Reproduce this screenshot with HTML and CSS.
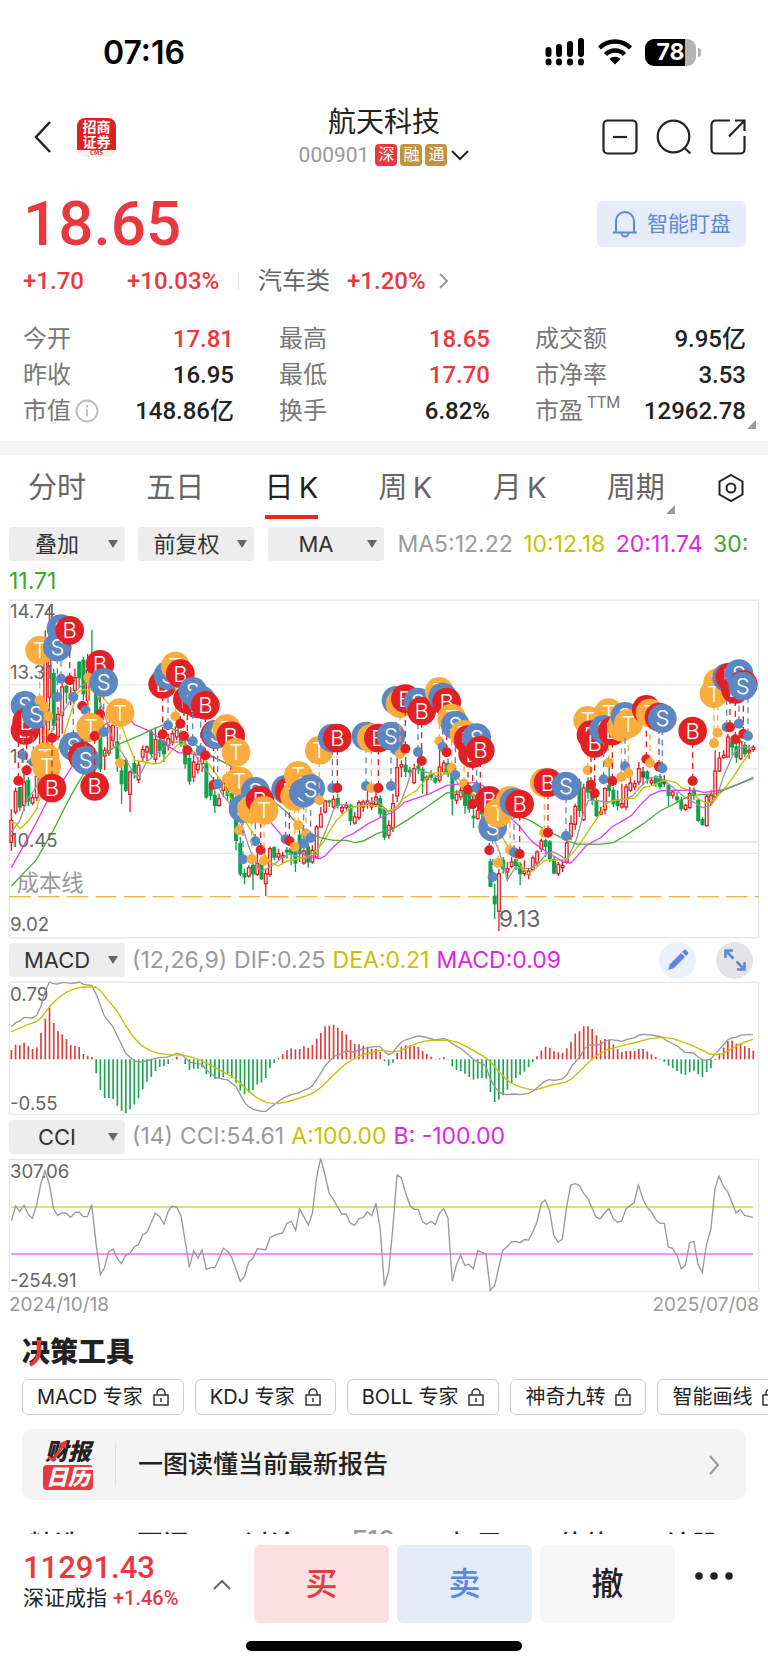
FILE: index.html
```html
<!DOCTYPE html>
<html lang="zh-CN">
<head>
    <meta charset="UTF-8">
    <meta name="viewport" content="width=device-width, initial-scale=1.0">
    <title>航天科技 000901</title>
    <link rel="stylesheet" href="styles.css">
</head>
<body>

    <!-- Status bar -->
    <div class="status">
        <span class="clock">07:16</span>
        <div class="status-icons">
            <svg width="40" height="28" viewBox="0 0 40 28">
                <path d="M3.500 12v4M14 9v7M25 6v10M36 3v13" stroke="#000" stroke-width="6" stroke-linecap="round"/>
                <path d="M3.500 23.500v1M14 23.500v1M25 23.500v1M36 23.500v1" stroke="#000" stroke-width="6" stroke-linecap="round"/>
            </svg>
            <svg width="34" height="26" viewBox="0 0 34 26" fill="none" stroke="#000" stroke-width="4.500">
                <path d="M1.500 9a22 22 0 0 1 31 0"/>
                <path d="M7.500 15.500a13.500 13.500 0 0 1 19 0"/>
                <path d="M11.500 20a8 8 0 0 1 11 0L17 25.500z" fill="#000" stroke="none"/>
            </svg>
            <span class="battery"><b>78</b></span>
        </div>
    </div>

    <!-- Title bar -->
    <header class="topbar">
        <div class="side left">
            <button class="icon-btn" aria-label="返回">
                <svg width="18" height="32" viewBox="0 0 18 32"><path d="M16 1L2 16l14 15" fill="none" stroke="#222" stroke-width="2.500"/></svg>
            </button>
            <div class="broker"><span>招商</span><span>证券</span><small>CMS</small></div>
        </div>
        <div class="stock">
            <h1>航天科技</h1>
            <div class="code">
                <span>000901</span><i class="tag red">深</i><i class="tag">融</i><i class="tag">通</i>
                <svg width="18" height="11" viewBox="0 0 18 11"><path d="M1 1l8 8 8-8" fill="none" stroke="#222" stroke-width="2"/></svg>
            </div>
        </div>
        <div class="side right">
            <button class="icon-btn" aria-label="移除自选">
                <svg width="36" height="36" viewBox="0 0 36 36" fill="none" stroke="#222" stroke-width="2.200"><rect x="1.500" y="1.500" width="33" height="33" rx="4"/><path d="M11 18h14"/></svg>
            </button>
            <button class="icon-btn" aria-label="搜索">
                <svg width="36" height="36" viewBox="0 0 36 36" fill="none" stroke="#222" stroke-width="2.200"><circle cx="17.500" cy="17.500" r="15.800"/><path d="M28 28.500l6.500 6"/></svg>
            </button>
            <button class="icon-btn" aria-label="分享">
                <svg width="36" height="36" viewBox="0 0 36 36" fill="none" stroke="#222" stroke-width="2.200"><path d="M20 1.500H5.500a4 4 0 0 0-4 4v25a4 4 0 0 0 4 4h25a4 4 0 0 0 4-4V17M19 17.500L34 2M25 1.500h9.500V12"/></svg>
            </button>
        </div>
    </header>

    <!-- Quote -->
    <section class="quote">
        <div class="price-row">
            <strong class="price">18.65</strong>
            <button class="watch">
                <svg width="26" height="28" viewBox="0 0 26 28" fill="none" stroke="#5b87dc" stroke-width="2"><path d="M1 22.500h24M4 22V11a9 9 0 0 1 18 0v11M9.500 23a3.500 3.500 0 0 0 7 0"/></svg>
                <span>智能盯盘</span>
            </button>
        </div>
        <div class="change-row">
            <span class="up chg">+1.70</span>
            <span class="up pct">+10.03%</span>
            <span class="sector">汽车类</span>
            <span class="up">+1.20%</span>
            <svg width="10" height="16" viewBox="0 0 10 16"><path d="M1 1l7 7-7 7" fill="none" stroke="#999" stroke-width="2"/></svg>
        </div>
        <dl class="stats">
            <div><dt>今开</dt><dd class="up">17.81</dd></div>
            <div><dt>最高</dt><dd class="up">18.65</dd></div>
            <div><dt>成交额</dt><dd>9.95亿</dd></div>
            <div><dt>昨收</dt><dd>16.95</dd></div>
            <div><dt>最低</dt><dd class="up">17.70</dd></div>
            <div><dt>市净率</dt><dd>3.53</dd></div>
            <div><dt>市值<svg width="24" height="24" viewBox="0 0 24 24" fill="none" stroke="#bbb" stroke-width="1.800"><circle cx="12" cy="12" r="10.500"/><path d="M12 10.500v7M12 6v2.500"/></svg></dt><dd>148.86亿</dd></div>
            <div><dt>换手</dt><dd>6.82%</dd></div>
            <div class="more"><dt>市盈<sup>TTM</sup></dt><dd>12962.78</dd></div>
        </dl>
    </section>

    <!-- Period tabs -->
    <nav class="tabs">
        <a href="#">分时</a>
        <a href="#">五日</a>
        <a href="#" class="active">日&thinsp;K</a>
        <a href="#">周&thinsp;K</a>
        <a href="#">月&thinsp;K</a>
        <a href="#" class="drop">周期</a>
        <button class="icon-btn" aria-label="设置">
            <svg width="28" height="30" viewBox="0 0 28 30" fill="none" stroke="#222" stroke-width="2"><path d="M14 2l11.500 6.500v13L14 28 2.500 21.500v-13z"/><circle cx="14" cy="15" r="4.500"/></svg>
        </button>
    </nav>

    <!-- Charts -->
    <main class="charts">
        <div class="legend">
            <label class="pick"><select aria-label="叠加"><option>叠加</option></select></label>
            <label class="pick"><select aria-label="复权"><option>前复权</option></select></label>
            <label class="pick"><select aria-label="主图指标"><option>MA</option></select></label>
            <span class="c-gray">MA5:12.22</span>
            <span class="c-yellow">10:12.18</span>
            <span class="c-pink">20:11.74</span>
            <span class="c-green">30:<wbr>11.71</span>
        </div>
        <svg id="kline" class="plot" viewBox="27 29 2250 1014"></svg>

        <div class="legend tools">
            <label class="pick"><select aria-label="副图指标一"><option>MACD</option></select></label>
            <span class="c-gray">(12,26,9)</span>
            <span class="c-gray">DIF:0.25</span>
            <span class="c-yellow">DEA:0.21</span>
            <span class="c-pink">MACD:0.09</span>
            <button class="round" aria-label="画线">
                <svg width="22" height="22" viewBox="0 0 22 22" fill="#5b87dc"><path d="M1 21l2-6L14 4l4 4L7 19zM15 3l2-2q1-1 2 0l2 2q1 1 0 2l-2 2z"/></svg>
            </button>
            <button class="round dark" aria-label="全屏">
                <svg width="22" height="22" viewBox="0 0 22 22" fill="none" stroke="#5b87dc" stroke-width="2.600"><path d="M1.500 9V1.500H9M2 2l7.500 7.500M13 20.500h7.500V13M20 20l-7.500-7.500"/></svg>
            </button>
        </div>
        <svg id="macd" class="plot" viewBox="27 156 2250 398"></svg>

        <div class="legend tools">
            <label class="pick"><select aria-label="副图指标二"><option>CCI</option></select></label>
            <span class="c-gray">(14)</span>
            <span class="c-gray">CCI:54.61</span>
            <span class="c-yellow">A:100.00</span>
            <span class="c-pink">B: -100.00</span>
        </div>
        <svg id="cci" class="plot" viewBox="27 687 2250 398"></svg>

        <div class="dates"><time>2024/10/18</time><time>2025/07/08</time></div>
    </main>

    <!-- Tools -->
    <section class="decide">
        <h2>决策工具
            <svg width="28" height="28" viewBox="0 0 28 28" fill="none" stroke="#e9383f" stroke-width="4"><path d="M17 1v12q-1 9-9 13"/></svg>
        </h2>
        <div class="chips">
            <button>MACD 专家 <svg class="lock" viewBox="0 0 16 18"><path d="M1 7h14v10H1zM4 7V5a4 4 0 0 1 8 0v2M8 10v4"/></svg></button>
            <button>KDJ 专家 <svg class="lock" viewBox="0 0 16 18"><path d="M1 7h14v10H1zM4 7V5a4 4 0 0 1 8 0v2M8 10v4"/></svg></button>
            <button>BOLL 专家 <svg class="lock" viewBox="0 0 16 18"><path d="M1 7h14v10H1zM4 7V5a4 4 0 0 1 8 0v2M8 10v4"/></svg></button>
            <button>神奇九转 <svg class="lock" viewBox="0 0 16 18"><path d="M1 7h14v10H1zM4 7V5a4 4 0 0 1 8 0v2M8 10v4"/></svg></button>
            <button>智能画线 <svg class="lock" viewBox="0 0 16 18"><path d="M1 7h14v10H1zM4 7V5a4 4 0 0 1 8 0v2M8 10v4"/></svg></button>
        </div>
        <a href="#" class="report">
            <span class="report-logo">
                <b>财报</b><em>日历</em>
                <svg width="24" height="24" viewBox="0 0 24 24"><path d="M3 18l5 3L18 6" fill="none" stroke="#e9383f" stroke-width="3"/><path d="M13 5l9-4-1 9z" fill="#e9383f"/></svg>
            </span>
            <span class="report-text">一图读懂当前最新报告</span>
            <svg width="12" height="20" viewBox="0 0 12 20"><path d="M2 1l8 9-8 9" fill="none" stroke="#999" stroke-width="2"/></svg>
        </a>
    </section>

    <nav class="news">
        <a href="#">精选</a><a href="#">要闻</a><a href="#">讨论</a><a href="#" class="dim">F10</a><a href="#">扫雷</a><a href="#">估值</a><a href="#">诊股</a>
    </nav>

    <!-- Trade bar -->
    <footer class="trade">
        <div class="index">
            <strong>11291.43</strong>
            <div>深证成指 <span class="up">+1.46%</span></div>
        </div>
        <button class="icon-btn" aria-label="展开指数">
            <svg width="18" height="11" viewBox="0 0 18 11"><path d="M1 10l8-8 8 8" fill="none" stroke="#666" stroke-width="2"/></svg>
        </button>
        <button class="act buy">买</button>
        <button class="act sell">卖</button>
        <button class="act cancel">撤</button>
        <button class="icon-btn dots" aria-label="更多">
            <svg width="38" height="8" viewBox="0 0 38 8" fill="#222"><circle cx="4" cy="4" r="3.800"/><circle cx="19" cy="4" r="3.800"/><circle cx="34" cy="4" r="3.800"/></svg>
        </button>
    </footer>
    <div class="home"></div>

<script src="chart.js"></script>
</body>
</html>
```
FILE: styles.css
```css
* {
    box-sizing: border-box;
}

body {
    margin: 0;
    background: #fff;
    color: #222;
    font-family: Inter, "Noto Sans CJK SC", sans-serif;
    overflow-x: hidden;
}

button {
    font-family: inherit;
    border: none;
    padding: 0;
    cursor: pointer;
}

a {
    color: inherit;
    text-decoration: none;
}

svg {
    display: block;
    flex: none;
}

.icon-btn {
    background: none;
}

.up {
    color: #e9383f;
}

/* Status bar */
.status {
    height: 104px;
    padding: 0 66px 0 103px;
    display: flex;
    align-items: center;
    justify-content: space-between;
}

.clock {
    font-size: 32px;
    font-weight: 600;
    color: #000;
}

.status-icons {
    display: flex;
    align-items: center;
    gap: 13px;
}

.battery {
    position: relative;
    width: 51px;
    height: 27px;
    border-radius: 9px;
    background: linear-gradient(90deg, #000 78%, #b3b3b3 78%);
    color: #fff;
    font-size: 23px;
    line-height: 27px;
    text-align: center;
    margin-right: 6px;
}

.battery::after {
    content: "";
    position: absolute;
    right: -5px;
    top: 9px;
    width: 3px;
    height: 9px;
    border-radius: 0 3px 3px 0;
    background: #b3b3b3;
}

/* Title bar */
.topbar {
    height: 80px;
    margin-bottom: 6px;
    padding: 0 22px 20px;
    display: grid;
    grid-template-columns: 1fr auto 1fr;
    align-items: center;
}

.side {
    display: flex;
    align-items: center;
    gap: 25px;
}

.side.left {
    padding-left: 12px;
}

.side.right {
    justify-content: flex-end;
    gap: 18px;
}

.broker {
    width: 39px;
    height: 39px;
    border-radius: 8px;
    background: linear-gradient(#dd2222 82%, #f6f0f0 82%);
    color: #fff;
    display: flex;
    flex-direction: column;
    align-items: center;
    font-family: "Noto Sans CJK SC", sans-serif;
    font-size: 14px;
    font-weight: 700;
    line-height: 15px;
    padding-top: 1px;
}

.broker small {
    font-size: 6px;
    line-height: 8px;
    color: #dd2222;
}

.stock h1 {
    margin: 0;
    font-size: 28px;
    line-height: 36px;
    font-weight: 400;
    text-align: center;
}

.code {
    display: flex;
    align-items: center;
    gap: 3px;
    font-family: Roboto, "Noto Sans CJK SC", sans-serif;
    font-size: 21px;
    line-height: 30px;
    color: #999;
}

.code span {
    margin-right: 3px;
}

.code svg {
    margin-left: 1px;
}

.tag {
    width: 22px;
    height: 22px;
    border-radius: 4px;
    background: #c4923f;
    color: #fff;
    font-size: 16px;
    font-style: normal;
    line-height: 21px;
    text-align: center;
}

.tag.red {
    background: #e9383f;
}

/* Quote */
.quote {
    padding: 0 22px 12px 23px;
    font-family: Roboto, "Noto Sans CJK SC", sans-serif;
    border-bottom: 14px solid #f4f4f4;
}

.price-row {
    display: flex;
    align-items: center;
    justify-content: space-between;
}

.price {
    font-size: 62px;
    line-height: 68px;
    font-weight: 500;
    color: #e9383f;
}

.watch {
    display: flex;
    align-items: center;
    gap: 9px;
    width: 149px;
    height: 46px;
    padding-left: 15px;
    border-radius: 6px;
    background: #e6ecf8;
    color: #5b87dc;
    font-size: 21px;
    line-height: 44px;
}

.change-row {
    display: flex;
    align-items: center;
    margin: 5px 0 22px;
    font-size: 24px;
    line-height: 36px;
    font-weight: 500;
}

.chg {
    width: 104px;
}

.pct {
    width: 112px;
    border-right: 1px solid #e5e5e5;
    line-height: 18px;
}

.sector {
    margin: 0 17px 0 19px;
    font-weight: 400;
    color: #666;
}

.change-row svg {
    margin-left: 13px;
}

.stats {
    display: grid;
    grid-template-columns: repeat(3, 1fr);
    column-gap: 45px;
    margin: 0;
}

.stats div {
    display: flex;
    align-items: center;
    justify-content: space-between;
    height: 36px;
    font-size: 24px;
    line-height: 36px;
    white-space: nowrap;
}

.stats dt {
    display: flex;
    align-items: center;
    gap: 4px;
    color: #777;
}

.stats dd {
    margin: 0;
    font-weight: 500;
}

.stats sup {
    align-self: flex-start;
    font-size: 16px;
    line-height: 20px;
}

.stats .more {
    position: relative;
}

.more::after,
.drop::after {
    content: "";
    position: absolute;
    right: -10px;
    bottom: 0;
    border-left: 9px solid transparent;
    border-bottom: 9px solid #999;
}

/* Period tabs */
.tabs {
    display: flex;
    align-items: center;
    justify-content: space-between;
    height: 66px;
    padding: 0 23px 0 28px;
    font-size: 29px;
    color: #666;
}

.tabs a {
    position: relative;
    line-height: 62px;
}

.tabs .icon-btn {
    margin-left: -8px;
}

.tabs .active {
    color: #222;
}

.tabs .active::after {
    content: "";
    position: absolute;
    left: 0;
    right: 0;
    bottom: 0;
    height: 4px;
    background: #f02222;
}

.tabs .drop::after {
    bottom: 5px;
}

/* Charts */
.charts {
    padding: 0 9px;
}

.legend {
    font-size: 23px;
    line-height: 37px;
    padding: 5px 0 0;
}

.legend span + span {
    margin-left: 4px;
}

.pick {
    position: relative;
    display: inline-block;
    vertical-align: top;
    width: 116px;
    height: 34px;
    margin: 1px 7px 0 0;
}

.pick select {
    appearance: none;
    display: block;
    width: 100%;
    height: 34px;
    padding: 0 20px 0 0;
    border: none;
    border-radius: 4px;
    background: #ededed;
    color: #333;
    font-family: inherit;
    font-size: 22px;
    line-height: 34px;
    text-align: center;
    text-align-last: center;
}

.pick::after {
    content: "";
    position: absolute;
    right: 7px;
    top: 13px;
    border: 5px solid transparent;
    border-top: 8px solid #666;
    border-bottom: 0;
}

.legend.tools {
    display: flex;
    align-items: center;
    gap: 7px;
    height: 44px;
    padding: 0;
}

.tools .pick,
.tools span + span {
    margin: 0;
}

.c-gray { color: #9a9a9e; }
.c-yellow { color: #c3c400; }
.c-pink { color: #e025e8; }
.c-green { color: #3da726; }

.round {
    width: 37px;
    height: 37px;
    border-radius: 50%;
    background: #ebf0fa;
    display: flex;
    align-items: center;
    justify-content: center;
    margin-left: auto;
}

.round.dark {
    background: #e4e4e6;
    margin-left: 13px;
    margin-right: 6px;
}

.plot {
    width: 100%;
    height: auto;
    overflow: visible;
}

.frame {
    fill: none;
    stroke: #e8e8e8;
    stroke-width: 4;
}

.grid {
    stroke: #e8e8e8;
    stroke-width: 4;
}

.axis {
    font-size: 56px;
    fill: #666;
}

.cost {
    font-size: 67px;
    fill: #999;
}

.low {
    font-size: 69px;
    fill: #666;
}

.badge {
    font-size: 66px;
    font-weight: 300;
    fill: #fff;
    text-anchor: middle;
}

.line {
    fill: none;
    stroke-width: 4;
}

.dates {
    display: flex;
    justify-content: space-between;
    font-size: 19px;
    line-height: 28px;
    color: #999;
}

/* Tools */
.decide {
    padding: 15px 22px 0;
}

.decide h2 {
    position: relative;
    margin: 0;
    font-size: 28px;
    line-height: 36px;
    font-weight: 900;
}

.decide h2 svg {
    position: absolute;
    left: 0;
    top: 5px;
}

.chips {
    display: flex;
    gap: 11px;
    margin: 9px -22px 14px 0;
    overflow: hidden;
}

.chips button {
    flex: none;
    display: flex;
    align-items: center;
    gap: 10px;
    height: 36px;
    padding: 0 14px;
    border: 1px solid #ccc;
    border-radius: 6px;
    background: #fff;
    color: #222;
    font-size: 20px;
    line-height: 34px;
}

.lock {
    width: 16px;
    height: 18px;
    fill: none;
    stroke: #333;
    stroke-width: 1.5;
}

.report {
    display: flex;
    align-items: center;
    height: 71px;
    padding: 0 26px 0 21px;
    border-radius: 10px;
    background: #f4f4f4;
}

.report-logo {
    position: relative;
    width: 50px;
    text-align: center;
    line-height: 25px;
}

.report-logo b {
    display: block;
    font-size: 23px;
    font-weight: 900;
    font-style: italic;
}

.report-logo em {
    display: block;
    border-radius: 4px;
    background: #e9383f;
    color: #fff;
    font-size: 22px;
    font-weight: 900;
}

.report-logo svg {
    position: absolute;
    left: 2px;
    top: -1px;
}

.report-text {
    flex: 1;
    margin-left: 22px;
    padding-left: 22px;
    border-left: 1px solid #e2e2e2;
    font-size: 25px;
    font-weight: 500;
    line-height: 43px;
}

.news {
    display: flex;
    justify-content: space-between;
    height: 11px;
    margin-top: 23px;
    padding: 0 50px 0 29px;
    overflow: hidden;
    font-size: 26px;
    line-height: 43px;
    font-weight: 500;
}

.news .dim {
    color: #999;
    line-height: 34px;
}

/* Trade bar */
.trade {
    display: flex;
    align-items: center;
    gap: 8px;
    padding: 11px 35px 18px 23px;
}

.index {
    flex: none;
    width: 182px;
    margin-bottom: 6px;
    font-size: 21px;
    line-height: 26px;
    white-space: nowrap;
}

.index .up {
    font-family: Roboto, sans-serif;
    font-weight: 500;
    font-size: 20px;
}

.index strong {
    display: block;
    font-family: Roboto, sans-serif;
    font-size: 31px;
    line-height: 34px;
    font-weight: 500;
    color: #e9383f;
}

.act {
    flex: 1;
    height: 78px;
    border-radius: 6px;
    font-size: 32px;
    font-weight: 500;
    line-height: 74px;
}

.index + .icon-btn {
    margin-right: 15px;
}

.buy {
    background: #fcdfe0;
    color: #e9383f;
}

.sell {
    background: #e4ebf8;
    color: #5b87dc;
}

.cancel {
    background: #f6f6f6;
    color: #222;
}

.dots {
    margin: 0 0 16px 12px;
}

.home {
    width: 36%;
    height: 10px;
    margin: 0 auto 14px;
    border-radius: 5px;
    background: #000;
}
```
FILE: chart.js
```js
const NS = 'http://www.w3.org/2000/svg';
const RED = '#e32024';
const GREEN = '#0fa24b';
const COLORS = { B: '#e32024', S: '#5d87c3', T: '#faac3c' };
const START = 34;
const STEP = 12.72;

function add(svg, name, attrs, text) {
    const el = document.createElementNS(NS, name);
    for (const key in attrs) el.setAttribute(key, attrs[key]);
    if (text) el.textContent = text;
    svg.appendChild(el);
    return el;
}

function line(svg, points, color) {
    add(svg, 'polyline', { points: points, class: 'line', stroke: color });
}

// direction, high, body top, body bottom, low
const candles = `u 657 690 756 782|u 592 603 665 672|d 590 592 650 662|u 545 575 645 662|d 560 571 632 648|u 610 622 638 645
u 540 558 622 632|u 400 410 480 560|u 120 165 480 600|u 50 170 320 420|d 235 250 405 420|u 350 372 440 450
u 270 290 375 430|d 285 288 305 340|u 290 310 322 345|u 235 262 300 320|d 212 216 262 290|d 200 210 310 330
u 190 240 330 345|d 118 260 290 300|d 250 300 370 395|d 300 370 535 545|u 470 480 497 540|u 400 410 488 496
u 395 405 450 470|d 410 455 505 545|d 530 542 580 640|d 502 510 600 605|u 540 545 612 665|d 497 520 548 565
u 512 525 568 578|u 465 478 500 515|u 465 470 485 512|d 418 425 490 500|u 410 448 507 520|d 430 450 480 500
d 440 455 490 515|u 430 445 465 480|u 420 430 455 465|u 400 410 440 450|d 420 430 460 470|d 450 465 520 535
d 490 505 572 583|u 490 515 560 575|u 500 522 538 550|u 480 500 520 545|d 510 520 620 625|d 580 590 615 630
d 600 615 645 668|u 610 625 645 650|u 560 580 600 620|d 590 600 615 630|d 590 610 640 660|d 660 690 750 780
d 740 760 850 858|d 835 850 860 882|u 825 832 857 862|d 815 825 850 898|u 790 820 852 857|d 800 820 865 870
u 835 850 880 918|u 768 775 852 860|d 768 772 800 810|u 775 790 800 812|u 785 795 800 822|d 770 780 785 805
d 765 775 790 825|d 770 785 818 845|d 720 735 790 815|u 770 782 818 823|d 760 770 815 832|u 765 780 815 820
u 705 710 800 805|u 650 672 710 712|u 628 632 665 670|d 628 632 635 650|u 615 627 650 655|d 610 625 645 655
u 645 652 662 672|u 635 645 652 658|d 640 645 690 705|u 665 680 698 703|u 630 637 682 690|u 628 635 650 665
u 600 632 640 655|u 620 640 650 660|u 605 620 642 650|d 615 625 670 680|d 650 655 740 750|u 690 705 735 745
u 610 640 713 725|u 500 532 617 635|u 510 523 530 560|d 500 525 543 560|d 530 540 545 560|u 520 535 577 582
d 520 528 538 550|d 530 537 570 610|u 555 560 567 612|d 540 550 560 570|d 558 565 575 580|u 470 530 570 577
u 510 518 545 550|d 505 520 550 560|d 545 555 625 675|u 600 612 630 642|u 590 600 620 630|d 585 600 645 670
d 600 610 655 668|d 650 678 682 713|u 650 660 685 687|d 640 650 670 690|d 650 680 720 740|d 805 815 888 890
d 880 918 940 985|u 835 850 963 1022|d 800 810 835 850|u 815 835 845 870|u 800 815 828 833|d 790 808 825 840
d 815 822 850 885|u 810 842 850 858|u 835 842 852 867|u 795 803 838 843|u 780 785 818 828|u 745 752 775 785
d 745 752 768 800|d 750 755 805 815|d 800 808 848 852|u 815 822 850 858|u 808 825 832 845|u 750 758 815 820
u 675 700 738 750|u 640 648 702 718|d 565 575 660 680|u 580 593 688 692|d 560 575 605 625|d 590 610 630 645
d 620 632 675 680|u 650 665 672 675|u 590 595 658 672|d 530 585 600 620|d 590 600 640 650|d 600 630 645 660
u 580 640 650 655|u 580 590 650 660|u 560 578 600 605|u 570 580 590 600|u 515 535 575 585|n 530 545 560 585
d 540 545 565 580|u 560 570 578 585|d 555 560 580 590|d 550 560 588 597|n 555 570 580 590|d 580 585 615 648
u 598 605 615 625|d 605 620 628 635|d 620 630 655 662|u 640 645 657 663|u 590 610 652 656|d 590 600 615 630
d 625 630 690 695|d 680 688 703 705|u 610 618 706 708|u 600 615 635 645|u 480 542 620 630|u 485 503 542 545
u 480 495 502 505|u 430 440 500 502|d 450 455 470 495|d 460 470 500 517|u 450 455 505 510|d 455 465 490 500
u 465 480 485 505|u 465 470 478 485`.split(/[|\n]/);

const ma = {
    '#999': '34,725 60,690 72,655 85,620 100,603 115,580 128,520 148,440 165,400 185,370 212,330 225,305 240,290 262,275 285,300 300,335 313,370 330,425 350,465 365,485 380,510 395,540 408,560 420,553 440,515 460,497 480,483 495,468 515,460 530,455 545,452 560,462 575,480 590,500 610,530 632,555 650,580 665,610 690,640 710,670 730,715 745,765 760,805 775,835 785,842 800,835 825,820 845,803 860,795 870,790 890,797 910,805 930,800 950,790 965,750 980,715 1000,660 1015,643 1040,642 1060,650 1080,648 1100,640 1130,630 1150,650 1165,665 1180,658 1200,640 1220,590 1235,540 1250,535 1275,545 1295,550 1315,560 1335,550 1350,550 1375,580 1400,605 1425,625 1445,660 1460,690 1480,740 1500,790 1522,870 1545,832 1590,835 1615,820 1640,790 1660,785 1680,795 1700,808 1715,780 1730,745 1750,670 1765,630 1785,630 1820,635 1850,630 1880,625 1900,615 1920,590 1950,563 1970,560 1990,567 2010,585 2030,600 2050,618 2070,630 2090,640 2107,652 2120,648 2133,645 2150,620 2170,560 2200,490 2215,475 2235,468 2260,475',
    '#c3c400': '34,695 48,700 60,715 85,692 110,655 130,590 160,510 190,440 215,360 235,305 250,297 275,300 300,312 325,340 350,375 365,405 385,460 405,510 435,515 460,521 480,518 500,500 520,475 535,462 550,460 570,475 590,490 610,500 640,540 670,580 700,640 740,700 760,730 785,780 810,815 835,827 860,812 900,805 930,795 950,780 970,755 990,720 1010,690 1030,670 1055,650 1090,645 1130,647 1150,655 1165,662 1185,655 1210,625 1250,600 1275,570 1290,550 1320,546 1350,548 1375,565 1400,590 1430,620 1460,670 1490,710 1530,780 1560,825 1585,852 1600,840 1635,810 1700,808 1725,780 1750,745 1780,700 1820,640 1840,630 1905,623 1930,592 1960,585 1985,572 2005,570 2030,578 2045,592 2070,602 2095,625 2115,637 2130,637 2150,620 2170,600 2200,560 2225,520 2240,500 2260,480',
    '#e83cf0': '34,832 80,750 110,695 140,635 165,600 190,570 215,530 250,470 300,410 340,390 370,385 395,392 402,402 450,423 480,445 500,465 535,487 570,490 640,500 690,525 740,600 790,670 815,700 840,730 870,765 900,785 930,800 960,805 975,797 1000,770 1035,740 1060,730 1105,700 1145,680 1180,665 1215,635 1290,610 1340,585 1390,580 1430,576 1455,590 1490,630 1535,685 1560,710 1580,735 1600,757 1640,785 1690,815 1712,818 1725,805 1760,765 1805,740 1835,710 1870,690 1895,675 1920,645 1950,615 1980,602 2000,600 2085,600 2110,606 2150,602 2175,597 2200,588 2240,572 2260,560',
    '#4fae3a': '34,887 65,855 110,807 125,780 160,720 200,640 230,585 255,545 285,505 315,490 360,460 420,435 450,420 490,404 530,420 580,460 640,500 700,530 750,570 800,615 830,640 860,665 900,710 930,730 960,742 1000,750 1040,750 1065,757 1090,752 1130,730 1180,715 1220,690 1280,650 1340,608 1380,604 1420,615 1460,635 1520,660 1560,680 1590,690 1630,715 1670,735 1710,755 1730,761 1800,762 1840,757 1870,740 1930,700 1980,662 2020,642 2070,615 2150,610 2175,597 2210,583 2240,570 2260,565'
};

// trade marks: type, badge x, badge y, dot x, dot y
const marks = `B 75 420 55 571|S 75 345 70 495|B 80 395 80 540|S 108 372 100 515|T 119 180 119 330|T 135 500 133 350|T 140 528 145 378
B 156 593 156 443|S 183 115 183 265|S 172 170 172 320|B 209 120 209 270|S 220 468 220 320|B 300 222 300 372|B 247 497 247 347
S 257 510 257 360|T 272 411 265 262|B 284 588 284 437|S 311 276 311 425|T 360 367 360 518|B 488 282 488 432|S 504 255 504 405
T 526 227 526 378|B 541 250 541 400|B 562 328 552 437|B 590 340 562 480|S 578 303 578 453|S 605 330 602 480|B 616 345 616 495
B 645 432 641 583|S 650 432 653 581|T 680 415 680 565|B 692 436 692 586|T 708 486 708 640|T 718 572 718 720|S 729 655 729 807
S 766 603 766 753|T 755 657 755 806|B 780 630 782 779|T 792 660 792 811|S 857 597 857 747|B 868 602 868 752|T 895 555 895 705
T 884 618 884 769|T 918 585 918 730|S 910 608 911 759|S 932 595 932 743|T 958 480 958 630|S 997 443 997 593|B 1012 443 1012 593
S 1098 437 1098 587|T 1114 443 1114 593|B 1135 443 1135 593|S 1173 437 1173 587|S 1188 330 1188 480|T 1200 340 1200 491
B 1216 325 1216 475|S 1254 335 1254 485|B 1265 362 1265 512|T 1318 303 1318 453|S 1328 320 1328 470|B 1340 335 1340 486
T 1355 383 1355 533|S 1366 404 1366 554|T 1392 432 1392 580|B 1404 448 1404 598|B 1418 490 1418 641|S 1430 442 1430 593
B 1441 480 1441 620|B 1468 630 1468 780|S 1478 710 1478 860|T 1494 668 1494 818|T 1530 630 1530 780|S 1542 636 1542 786
B 1559 641 1559 791|T 1633 577 1633 727|B 1644 577 1644 727|S 1698 587 1698 737|T 1763 390 1763 540|B 1773 433 1773 583
B 1784 459 1784 609|T 1826 367 1826 517|S 1811 417 1811 567|B 1837 422 1837 572|T 1864 410 1864 560|S 1875 378 1875 528
T 1885 400 1885 549|B 1939 357 1939 507|T 1950 368 1950 518|B 1977 380 1977 529|S 1987 384 1987 534|B 2078 422 2078 572
T 2153 277 2153 427|T 2142 310 2142 459|S 2180 262 2180 411|B 2190 260 2190 411|B 2206 297 2206 447|S 2217 250 2217 400
B 2230 282 2230 431|S 2228 287 2244 437`.split(/[|\n]/);

function drawKline() {
    const svg = document.getElementById('kline');
    add(svg, 'rect', { x: 28, y: 30, width: 2248, height: 1012, class: 'frame' });
    [283, 536, 789].forEach(y => add(svg, 'path', { d: `M28 ${y}H2276`, class: 'grid' }));
    add(svg, 'path', { d: 'M1500 755H2276', stroke: '#ddd', 'stroke-width': 5 });
    add(svg, 'path', { d: 'M28 919H2276', stroke: '#faac3c', 'stroke-width': 4, 'stroke-dasharray': '64 22' });

    candles.forEach((row, i) => {
        const [dir, high, top, bottom, low] = row.split(' ');
        const x = START + i * STEP;
        const color = dir === 'u' ? RED : dir === 'd' ? GREEN : '#555';
        add(svg, 'path', { d: `M${x} ${high}V${top}M${x} ${bottom}V${low}`, stroke: color, 'stroke-width': 4 });
        add(svg, 'rect', { x: x - 4, y: top, width: 8, height: bottom - top, stroke: color, 'stroke-width': 4, fill: dir === 'u' ? '#fff' : color });
    });
    for (const color in ma) line(svg, ma[color], color);

    [['14.74', 84], ['13.31', 267], ['11.88', 519], ['10.45', 771], ['9.02', 1023]].forEach(([t, y]) => {
        add(svg, 'text', { x: 30, y: y, class: 'axis' }, t);
    });
    add(svg, 'text', { x: 50, y: 902, class: 'cost' }, '成本线');
    add(svg, 'text', { x: 1496, y: 1009, class: 'low' }, '9.13');

    marks.forEach(row => {
        const [type, x, y, dx, dy] = row.split(' ');
        const color = COLORS[type];
        add(svg, 'path', { d: `M${dx} ${y}V${dy}`, stroke: color, 'stroke-width': 4, 'stroke-dasharray': '18 14' });
        add(svg, 'circle', { cx: dx, cy: dy, r: 15, fill: color });
        add(svg, 'circle', { cx: x, cy: y, r: 43, fill: color });
        add(svg, 'text', { x: x, y: +y + 24, class: 'badge' }, type);
    });
}

// tip of every MACD bar, the zero line is at 388
const bars = [360, 344, 346, 338, 348, 357, 352, 309, 266, 234, 279, 303, 313, 327, 345, 348, 351, 372, 377, 381,
    430, 480, 504, 504, 507, 527, 543, 550, 538, 524, 505, 478, 455, 441, 423, 411, 408, 402, 390, 380,
    386, 402, 420, 416, 416, 412, 432, 441, 446, 446, 441, 434, 444, 458, 482, 493, 488, 480, 463, 458,
    444, 415, 399, 384, 372, 361, 355, 358, 357, 349, 353, 345, 326, 309, 289, 287, 284, 293, 303, 313,
    330, 342, 343, 347, 350, 356, 356, 366, 394, 407, 398, 368, 350, 346, 346, 348, 351, 363, 372, 380,
    387, 385, 381, 387, 409, 420, 423, 431, 441, 449, 446, 444, 446, 486, 516, 509, 496, 479, 459, 444,
    435, 425, 411, 397, 379, 361, 351, 354, 364, 367, 369, 355, 335, 311, 304, 289, 289, 297, 316, 331,
    327, 329, 343, 357, 366, 363, 363, 363, 357, 357, 364, 373, 381, 389, 396, 407, 415, 423, 431, 435,
    427, 422, 433, 441, 426, 415, 390, 370, 353, 334, 332, 341, 341, 349, 354, 362];

const dif = '34,290 47,278 60,273 72,262 97,264 110,256 122,230 135,185 148,156 160,161 172,162 186,158 200,158 212,161 225,159 238,156 250,163 275,166 290,196 313,258 338,289 377,370 402,392 416,397 440,393 462,386 480,382 500,382 515,376 530,370 545,374 568,396 590,401 606,402 619,420 650,444 683,450 708,470 721,494 734,518 746,530 760,538 785,544 797,544 810,533 823,524 836,514 848,505 874,494 899,488 912,480 925,476 937,467 950,448 962,430 975,408 1000,381 1030,367 1040,363 1060,366 1077,360 1095,355 1110,352 1128,349 1140,350 1155,366 1166,374 1178,369 1191,350 1205,336 1215,330 1238,323 1255,318 1275,321 1305,330 1330,326 1342,329 1357,341 1370,349 1385,357 1420,388 1435,397 1450,402 1459,412 1470,445 1484,470 1500,488 1518,494 1545,492 1560,494 1585,490 1600,483 1618,467 1633,455 1647,449 1665,451 1687,447 1700,435 1718,405 1740,380 1755,355 1768,345 1795,345 1815,334 1830,329 1850,331 1865,334 1880,329 1905,323 1915,316 1930,313 1955,315 1985,321 1997,330 2032,348 2055,367 2080,369 2105,389 2120,391 2132,387 2150,368 2170,345 2183,330 2195,324 2208,322 2220,316 2240,314 2259,314';
const dea = '34,305 60,294 85,283 110,275 125,262 150,228 175,203 200,186 225,175 250,171 285,171 300,181 320,206 350,241 375,284 400,321 425,347 450,362 475,370 510,374 545,375 570,380 605,392 640,410 700,442 720,459 750,488 775,506 800,518 830,521 860,516 890,507 920,497 940,489 965,470 1000,435 1030,407 1060,387 1095,372 1128,363 1145,361 1180,366 1200,362 1215,356 1250,340 1270,334 1300,330 1345,331 1370,336 1400,350 1430,367 1460,385 1475,400 1500,429 1530,457 1560,471 1590,479 1610,479 1655,465 1695,457 1715,447 1740,423 1780,383 1820,360 1865,347 1900,339 1950,326 1985,322 2020,326 2070,344 2110,362 2130,372 2150,374 2170,370 2200,353 2230,338 2259,328';

function drawMacd() {
    const svg = document.getElementById('macd');
    add(svg, 'rect', { x: 28, y: 157, width: 2248, height: 396, class: 'frame' });
    bars.forEach((tip, i) => {
        add(svg, 'path', { d: `M${START + i * STEP} 388V${tip}`, stroke: tip < 388 ? '#e03c3c' : '#1aa552', 'stroke-width': 5 });
    });
    add(svg, 'text', { x: 30, y: 212, class: 'axis' }, '0.79');
    add(svg, 'text', { x: 30, y: 540, class: 'axis' }, '-0.55');
    line(svg, dif, '#999');
    line(svg, dea, '#c3c400');
}

const cci = '34,872 47,828 59,845 72,826 85,854 97,865 110,826 123,758 135,722 148,763 161,837 173,857 186,848 199,850 212,862 225,848 237,846 250,860 262,860 275,824 288,940 301,1034 313,1014 326,966 339,957 352,986 364,1001 377,976 390,970 403,950 415,944 428,915 441,907 466,849 479,860 492,882 505,844 516,829 530,831 543,858 555,930 568,1012 581,962 594,984 606,959 619,1018 632,1013 645,1013 670,955 683,964 696,985 721,1054 734,1038 746,997 759,984 772,956 797,959 810,923 823,916 848,908 861,880 874,874 887,901 899,837 925,885 937,850 950,742 962,685 975,735 988,791 1000,808 1025,852 1038,852 1051,879 1064,886 1077,866 1089,863 1102,846 1115,857 1128,820 1141,900 1153,1068 1166,1024 1178,900 1191,735 1204,743 1216,787 1230,826 1242,838 1255,838 1268,876 1280,883 1293,874 1306,884 1318,851 1331,836 1344,864 1350,960 1357,1054 1369,1005 1382,975 1394,1006 1407,1003 1420,1016 1433,962 1458,972 1471,1081 1484,1067 1508,961 1521,951 1534,936 1547,934 1560,938 1573,929 1586,930 1598,907 1611,876 1624,820 1636,810 1649,843 1661,915 1674,936 1687,928 1700,830 1712,766 1725,761 1738,766 1751,790 1763,804 1788,861 1801,867 1814,849 1827,836 1840,866 1852,877 1865,873 1878,837 1903,817 1915,765 1930,810 1942,832 1954,846 1967,868 1980,880 1993,880 2005,951 2018,955 2032,978 2044,1017 2056,1006 2069,938 2082,935 2094,1003 2107,1028 2119,946 2133,896 2145,776 2157,738 2171,770 2183,785 2208,848 2221,839 2234,856 2259,862';

function drawCci() {
    const svg = document.getElementById('cci');
    add(svg, 'rect', { x: 28, y: 688, width: 2248, height: 396, class: 'frame' });
    add(svg, 'text', { x: 30, y: 743, class: 'axis' }, '307.06');
    add(svg, 'text', { x: 30, y: 1070, class: 'axis' }, '-254.91');
    add(svg, 'path', { d: 'M34 831H2259', stroke: '#d3d545', 'stroke-width': 5 });
    add(svg, 'path', { d: 'M34 972H2259', stroke: '#ee6cf3', 'stroke-width': 5 });
    line(svg, cci, '#999');
}

drawKline();
drawMacd();
drawCci();
```
